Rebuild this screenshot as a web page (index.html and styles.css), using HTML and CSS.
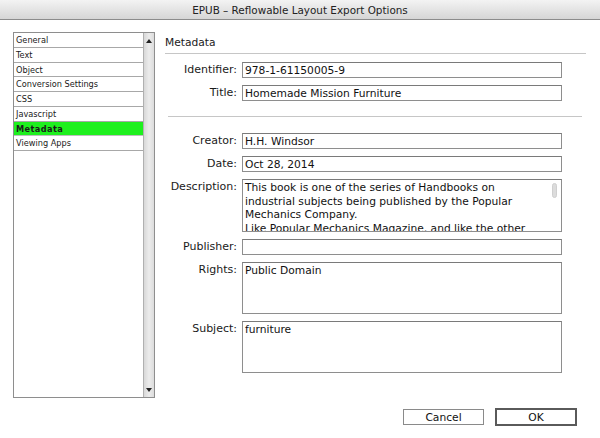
FILE: index.html
```html
<!DOCTYPE html>
<html>
<head>
<meta charset="utf-8">
<link rel="stylesheet" href="styles.css">
</head>
<body>
<div class="titlebar">EPUB – Reflowable Layout Export Options</div>
<div class="main">
  <div class="sidebar">
    <ul class="list">
      <li>General</li>
      <li>Text</li>
      <li>Object</li>
      <li>Conversion Settings</li>
      <li>CSS</li>
      <li>Javascript</li>
      <li class="selected">Metadata</li>
      <li>Viewing Apps</li>
    </ul>
    <div class="scrollbar">
      <span class="arrow up"></span>
      <span class="arrow down"></span>
    </div>
  </div>
  <div class="content">
    <div class="heading">Metadata</div>
    <div class="form first">
      <label class="label">Identifier:</label>
      <div class="field">978-1-61150005-9</div>
      <label class="label">Title:</label>
      <div class="field">Homemade Mission Furniture</div>
    </div>
    <div class="separator"></div>
    <div class="form">
      <label class="label">Creator:</label>
      <div class="field">H.H. Windsor</div>
      <label class="label">Date:</label>
      <div class="field">Oct 28, 2014</div>
      <label class="label">Description:</label>
      <div class="field area desc"><div class="desc-text">This book is one of the series of Handbooks on<br>industrial subjects being published by the Popular<br>Mechanics Company.<br>Like Popular Mechanics Magazine, and like the other</div><span class="thumb"></span></div>
      <label class="label">Publisher:</label>
      <div class="field"></div>
      <label class="label">Rights:</label>
      <div class="field area">Public Domain</div>
      <label class="label">Subject:</label>
      <div class="field area">furniture</div>
    </div>
  </div>
</div>
<div class="buttons">
  <button class="btn">Cancel</button>
  <button class="btn default">OK</button>
</div>
</body>
</html>
```
FILE: styles.css
```css
html, body {
  margin: 0;
  padding: 0;
  background: #ffffff;
  width: 600px;
  height: 438px;
  overflow: hidden;
  font-family: "DejaVu Sans", "Liberation Sans", sans-serif;
  color: #1a1a1a;
}

.titlebar {
  height: 19px;
  line-height: 20px;
  text-align: center;
  font-size: 10.4px;
  color: #222;
  background: linear-gradient(#f3f3f3, #d6d6d6);
  border-bottom: 1px solid #8c8c8c;
}

.main {
  display: flex;
  gap: 10px;
  padding: 12px 0 0 13px;
}

.sidebar {
  position: relative;
  display: flex;
  width: 140px;
  height: 364px;
  border: 1px solid #8e8e8e;
  background: #fff;
}

.list {
  list-style: none;
  margin: 0;
  padding: 0;
  flex: 1;
}

.list li {
  height: 13.75px;
  line-height: 14px;
  padding-left: 2px;
  font-size: 8.2px;
  color: #1a1a1a;
  border-bottom: 1px solid #a8a8a8;
}

.list li.selected {
  background: #1ef01e;
  font-weight: bold;
  letter-spacing: 0.4px;
  border-bottom-color: #bdbdbd;
}

.scrollbar {
  width: 10px;
  border-left: 1px solid #b0b0b0;
  background: linear-gradient(90deg, #d8d8d8, #ececec 50%, #dcdcdc);
  display: flex;
  flex-direction: column;
  justify-content: space-between;
  align-items: center;
  padding: 6px 0 5px;
}

.arrow {
  width: 0;
  height: 0;
  border-left: 3px solid transparent;
  border-right: 3px solid transparent;
}

.arrow.up {
  border-bottom: 4px solid #222;
}

.arrow.down {
  border-top: 4px solid #222;
}

.content {
  width: 421px;
}

.heading {
  font-size: 10.7px;
  line-height: 14px;
  padding: 4px 0 3px 0;
  color: #1a1a1a;
  border-bottom: 1px solid #c6c6c6;
}

.form {
  display: grid;
  grid-template-columns: 72px 320px;
  column-gap: 5px;
  row-gap: 7px;
  font-size: 10.7px;
}

.form.first {
  margin-top: 8px;
}

.label {
  text-align: right;
  line-height: 16px;
  font-size: 11px;
  color: #1a1a1a;
  white-space: nowrap;
}

.field {
  box-sizing: border-box;
  height: 16px;
  line-height: 13px;
  padding: 1px 3px 0 2px;
  border: 1px solid #8e8e8e;
  border-top-color: #7a7a7a;
  background: #fff;
  white-space: nowrap;
  overflow: hidden;
  color: #111;
}

.field.area {
  height: 52px;
  line-height: 13.5px;
  padding-top: 1px;
  white-space: normal;
}

.field.desc {
  position: relative;
  height: 53px;
}

.desc-text {
  white-space: nowrap;
}

.thumb {
  position: absolute;
  right: 4px;
  top: 3px;
  width: 5px;
  height: 15px;
  border-radius: 3px;
  background: #dcdcdc;
  border: 1px solid #cfcfcf;
  box-sizing: border-box;
}

.separator {
  margin: 15px 4px 16px 3px;
  border-top: 1px solid #c6c6c6;
}

.buttons {
  display: flex;
  justify-content: flex-end;
  align-items: center;
  gap: 11px;
  padding: 10px 23px 0 0;
}

.btn {
  box-sizing: border-box;
  width: 81px;
  height: 16px;
  margin: 0;
  padding: 0;
  font-family: "DejaVu Sans", "Liberation Sans", sans-serif;
  font-size: 10.7px;
  line-height: 13px;
  color: #111;
  background: #fff;
  border: 1px solid #8a8a8a;
  border-radius: 0;
}

.btn.default {
  width: 82px;
  height: 18px;
  border: 2px solid #5a5a5a;
}
```
